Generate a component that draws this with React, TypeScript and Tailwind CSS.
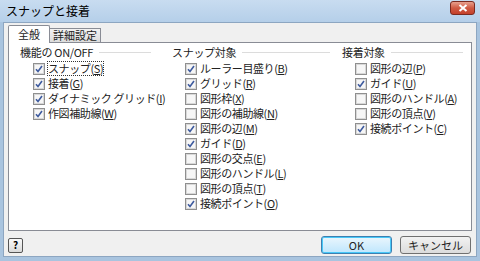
const font = { fontFamily: '"Noto Sans CJK JP", "Liberation Sans", sans-serif' };

type Item = { label: string; key: string; checked: boolean };

const groups: { title: string; width: string; lineW: string; items: Item[] }[] = [
  {
    title: "機能の ON/OFF",
    width: "w-[152px]",
    lineW: "w-[52px]",
    items: [
      { label: "スナップ", key: "S", checked: true },
      { label: "接着", key: "G", checked: true },
      { label: "ダイナミック グリッド", key: "I", checked: true },
      { label: "作図補助線", key: "W", checked: true },
    ],
  },
  {
    title: "スナップ対象",
    width: "w-[170px]",
    lineW: "w-[88px]",
    items: [
      { label: "ルーラー目盛り", key: "B", checked: true },
      { label: "グリッド", key: "R", checked: true },
      { label: "図形枠", key: "X", checked: false },
      { label: "図形の補助線", key: "N", checked: false },
      { label: "図形の辺", key: "M", checked: true },
      { label: "ガイド", key: "D", checked: true },
      { label: "図形の交点", key: "E", checked: false },
      { label: "図形のハンドル", key: "L", checked: false },
      { label: "図形の頂点", key: "T", checked: false },
      { label: "接続ポイント", key: "O", checked: true },
    ],
  },
  {
    title: "接着対象",
    width: "w-[130px]",
    lineW: "w-[72px]",
    items: [
      { label: "図形の辺", key: "P", checked: false },
      { label: "ガイド", key: "U", checked: true },
      { label: "図形のハンドル", key: "A", checked: false },
      { label: "図形の頂点", key: "V", checked: false },
      { label: "接続ポイント", key: "C", checked: true },
    ],
  },
];

const Check = ({ checked }: { checked: boolean }) => (
  <span className="w-[12px] h-[12px] border border-[#8f8f8f] bg-gradient-to-br from-[#dcdcdc] to-[#fbfbfb] flex items-center justify-center shrink-0">
    <span className="w-[10px] h-[10px] border border-[#d8d8d8] bg-[#f6f6f6] flex items-center justify-center">
      {checked && (
        <svg width="8" height="8" viewBox="0 0 8 8">
          <path d="M1 4.2 L3 6.5 L7 1" stroke="#3d5a9e" strokeWidth="1.6" fill="none" />
        </svg>
      )}
    </span>
  </span>
);

const Row = ({ item, first }: { item: Item; first: boolean }) => (
  <div className="flex items-center gap-[3px] h-[15px]">
    <Check checked={item.checked} />
    <span
      className={`whitespace-nowrap text-[11px] leading-[13px] text-[#222] tracking-[-0.4px] ${
        first ? "outline outline-1 outline-dotted outline-[#333]" : ""
      }`}
    >
      {item.label}(<span className="underline">{item.key}</span>)
    </span>
  </div>
);

export default function App() {
  return (
    <div className="w-[480px] h-[261px] bg-[#a9c4df] flex flex-col" style={font}>
      <div className="h-[22px] shrink-0 pl-[6px] pr-[5px] bg-gradient-to-b from-[#c8dcf0] to-[#b5cfe9] flex items-center justify-between">
        <span className="text-[12px] text-black">スナップと接着</span>
        <div className="w-[25px] h-[14px] mt-[-6px] rounded-[3px] border border-[#7a2a20] bg-gradient-to-b from-[#e7a08e] via-[#cf5a43] to-[#c4402a] flex items-center justify-center">
          <svg width="10" height="8" viewBox="0 0 10 8">
            <path d="M1.5 1 L8.5 7 M8.5 1 L1.5 7" stroke="white" strokeWidth="2" />
          </svg>
        </div>
      </div>
      <div className="h-[235px] mx-[3px] bg-[#f0f0f0] border border-[#8da6c1] flex flex-col px-[4px] pt-[2px]">
        <div className="flex items-end h-[17px] shrink-0 text-[11px] text-[#222]">
          <div className="h-[18px] px-[9px] bg-white border border-[#898c95] border-b-0 flex items-center relative z-10 -mb-px rounded-t-[2px]">
            全般
          </div>
          <div className="h-[14px] px-[3px] bg-gradient-to-b from-[#f2f2f2] to-[#dcdcdc] border border-[#898c95] border-l-0 border-b-0 flex items-center">
            詳細設定
          </div>
        </div>
        <div className="h-[189px] shrink-0 bg-white border border-[#898c95] flex pl-[11px] pt-[1px]">
          {groups.map((g) => (
            <div key={g.title} className={`${g.width} shrink-0 flex flex-col`}>
              <div className="flex items-center gap-[6px] h-[16px] text-[11px] text-[#222] whitespace-nowrap">
                <span className="shrink-0 tracking-[-0.3px]">{g.title}</span>
                <span className={`${g.lineW} h-px bg-[#dcdcdc] shrink-0`} />
              </div>
              <div className="flex flex-col pl-[13px] pt-[1px]">
                {g.items.map((it, i) => (
                  <Row key={it.key} item={it} first={g.title === "機能の ON/OFF" && i === 0} />
                ))}
              </div>
            </div>
          ))}
        </div>
        <div className="flex items-center justify-between mt-[5px] pr-[1px]">
          <div className="w-[15px] h-[15px] border border-[#555] rounded-[2px] bg-gradient-to-b from-[#fafafa] to-[#dadada] flex items-center justify-center text-[10px] font-bold leading-none">
            ?
          </div>
          <div className="flex gap-[8px] text-[11px] text-[#222]">
            <button className="w-[71px] h-[18px] rounded-[3px] border border-[#3c7fb1] bg-gradient-to-b from-[#eaf6fd] to-[#bee6fd] shadow-[inset_0_0_0_1px_#48c8f8] flex items-center justify-center">
              OK
            </button>
            <button className="w-[71px] h-[18px] rounded-[3px] border border-[#707070] bg-gradient-to-b from-[#f2f2f2] to-[#dcdcdc] flex items-center justify-center">
              キャンセル
            </button>
          </div>
        </div>
      </div>
    </div>
  );
}
